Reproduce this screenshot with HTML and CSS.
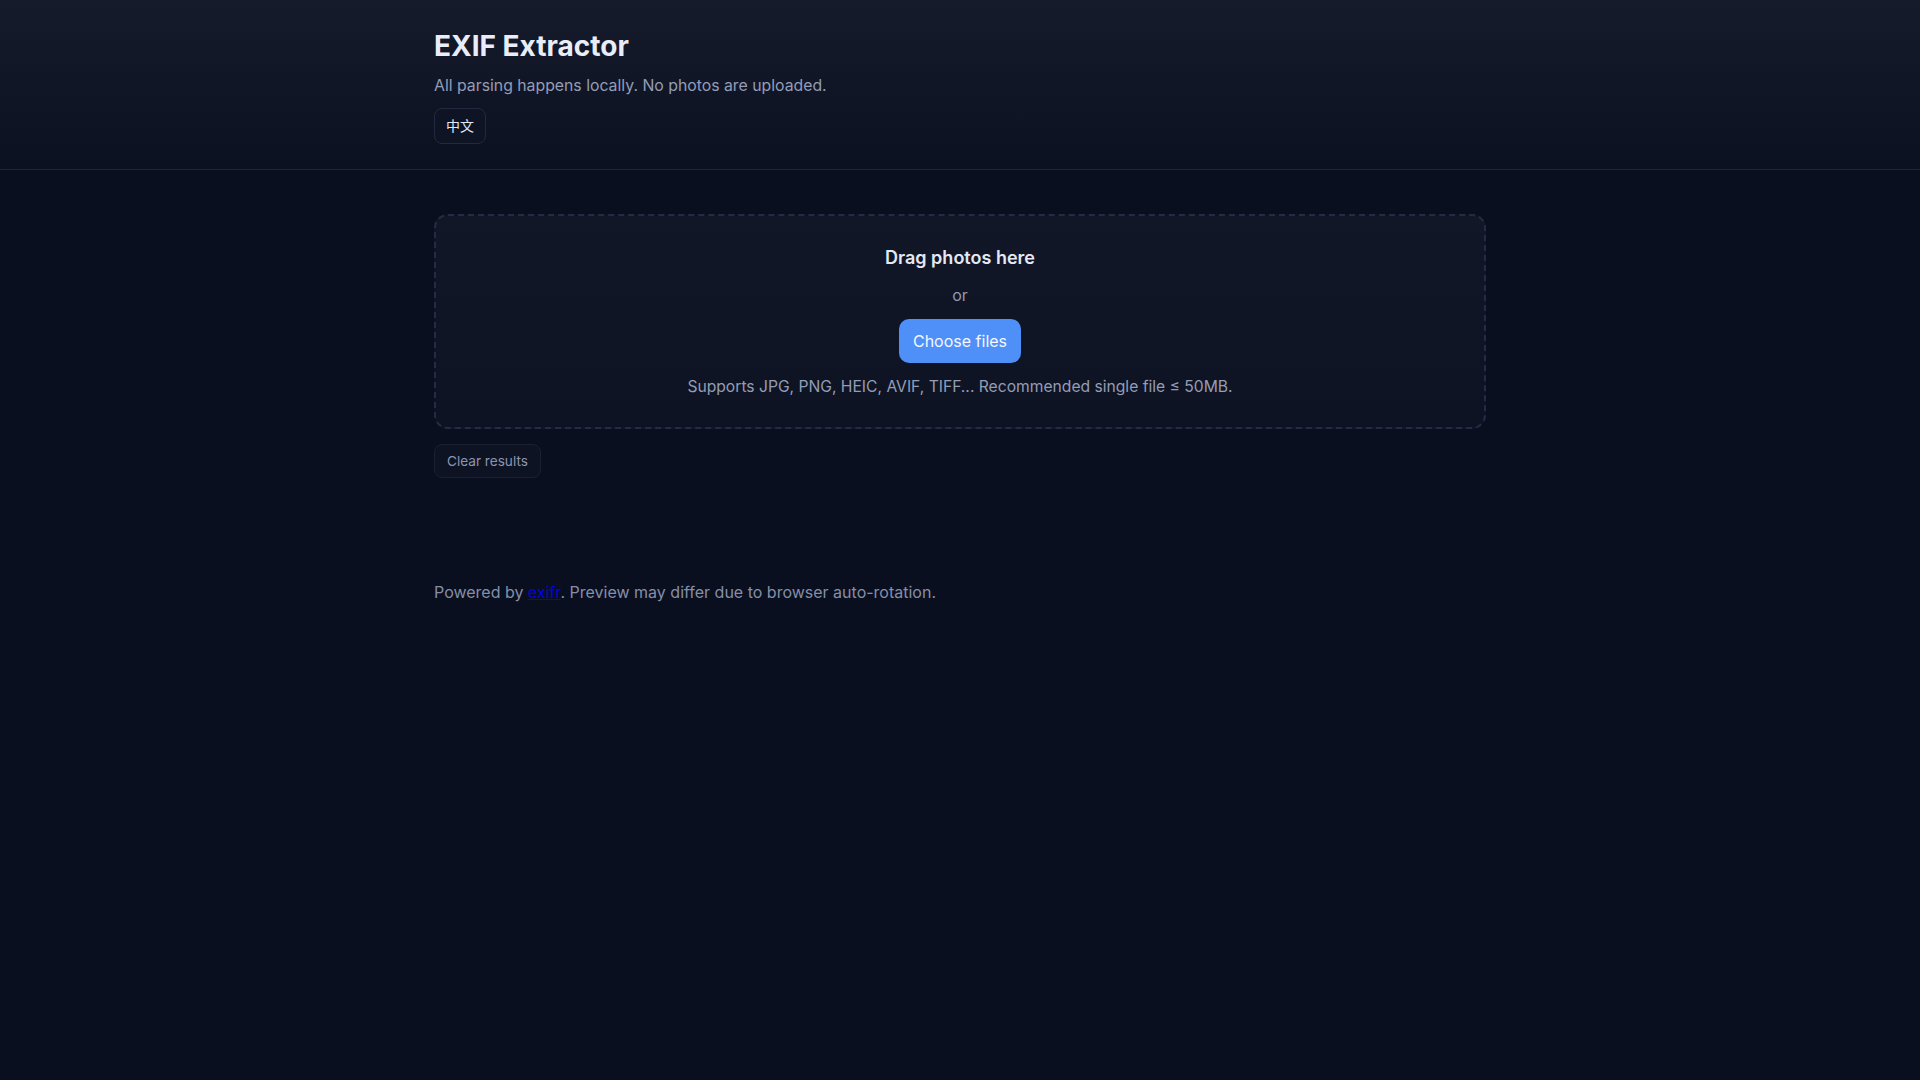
FILE: index.html
```html
<!DOCTYPE html>
<html lang="en">
<head>
<meta charset="utf-8">
<title>EXIF Extractor</title>
<link rel="stylesheet" href="styles.css">
</head>
<body>
<header class="site-header">
  <div class="container">
    <h1 class="title">EXIF Extractor</h1>
    <p class="subtitle">All parsing happens locally. No photos are uploaded.</p>
    <button class="lang-btn" type="button">中文</button>
  </div>
</header>
<main class="container main">
  <section class="dropzone">
    <div class="drop-title">Drag photos here</div>
    <div class="drop-or">or</div>
    <button class="choose-btn" type="button">Choose files</button>
    <div class="drop-hint">Supports JPG, PNG, HEIC, AVIF, TIFF... Recommended single file ≤ 50MB.</div>
  </section>
  <div class="actions">
    <button class="clear-btn" type="button">Clear results</button>
  </div>
  <footer class="footer">Powered by <a href="#" class="link">exifr</a>. Preview may differ due to browser auto-rotation.</footer>
</main>
</body>
</html>
```
FILE: styles.css
```css
* { box-sizing: border-box; }
html, body { margin: 0; padding: 0; }
body {
  background: #0a0f1f;
  font-family: Inter, "Noto Sans", "Noto Sans CJK SC", sans-serif;
  color: #e6ebf7;
  min-height: 100vh;
}
.container {
  max-width: 1100px;
  margin: 0 auto;
  padding: 0 24px;
}
.site-header {
  background: linear-gradient(180deg, #161b2c 0%, #0c1121 100%);
  border-bottom: 1px solid #1f2539;
  padding: 29px 0 25px;
}
.title {
  margin: 0;
  font-size: 28px;
  line-height: 34px;
  font-weight: 700;
  color: #e9edf9;
}
.subtitle {
  margin: 11px 0 0;
  font-size: 15.8px;
  line-height: 24px;
  color: #939db8;
}
.lang-btn {
  margin-top: 10px;
  display: block;
  font-family: Inter, "Noto Sans CJK SC", sans-serif;
  font-size: 14px;
  line-height: 20px;
  padding: 7px 11px;
  color: #e2e7f3;
  background: #0f1424;
  border: 1px solid #212a40;
  border-radius: 8px;
}
.main { padding-top: 44px; }
.dropzone {
  border: 2px dashed #242b45;
  border-radius: 14px;
  background: linear-gradient(180deg, #121727 0%, #0e1323 100%);
  padding: 28px 24px;
  display: flex;
  flex-direction: column;
  align-items: center;
  gap: 12px;
  text-align: center;
}
.drop-title {
  font-size: 18px;
  line-height: 27px;
  font-weight: 600;
  color: #e3e8f4;
}
.drop-or {
  font-size: 16px;
  line-height: 24px;
  color: #8f99b3;
}
.choose-btn {
  font-family: inherit;
  font-size: 16px;
  line-height: 24px;
  padding: 10px 14px;
  color: #f4f7ff;
  background: #4f8ff8;
  border: 0;
  border-radius: 10px;
}
.drop-hint {
  font-size: 15.65px;
  line-height: 24px;
  color: #939db6;
}
.actions { margin-top: 15px; display: flex; }
.clear-btn {
  font-family: inherit;
  font-size: 13.6px;
  line-height: 16px;
  padding: 8px 12px;
  color: #8c95ad;
  background: #0e1323;
  border: 1px solid #1a2033;
  border-radius: 8px;
}
.footer {
  margin-top: 102px;
  font-size: 16px;
  line-height: 24px;
  color: #858ea8;
}
.link { color: #0000ee; text-decoration: underline; }
```
